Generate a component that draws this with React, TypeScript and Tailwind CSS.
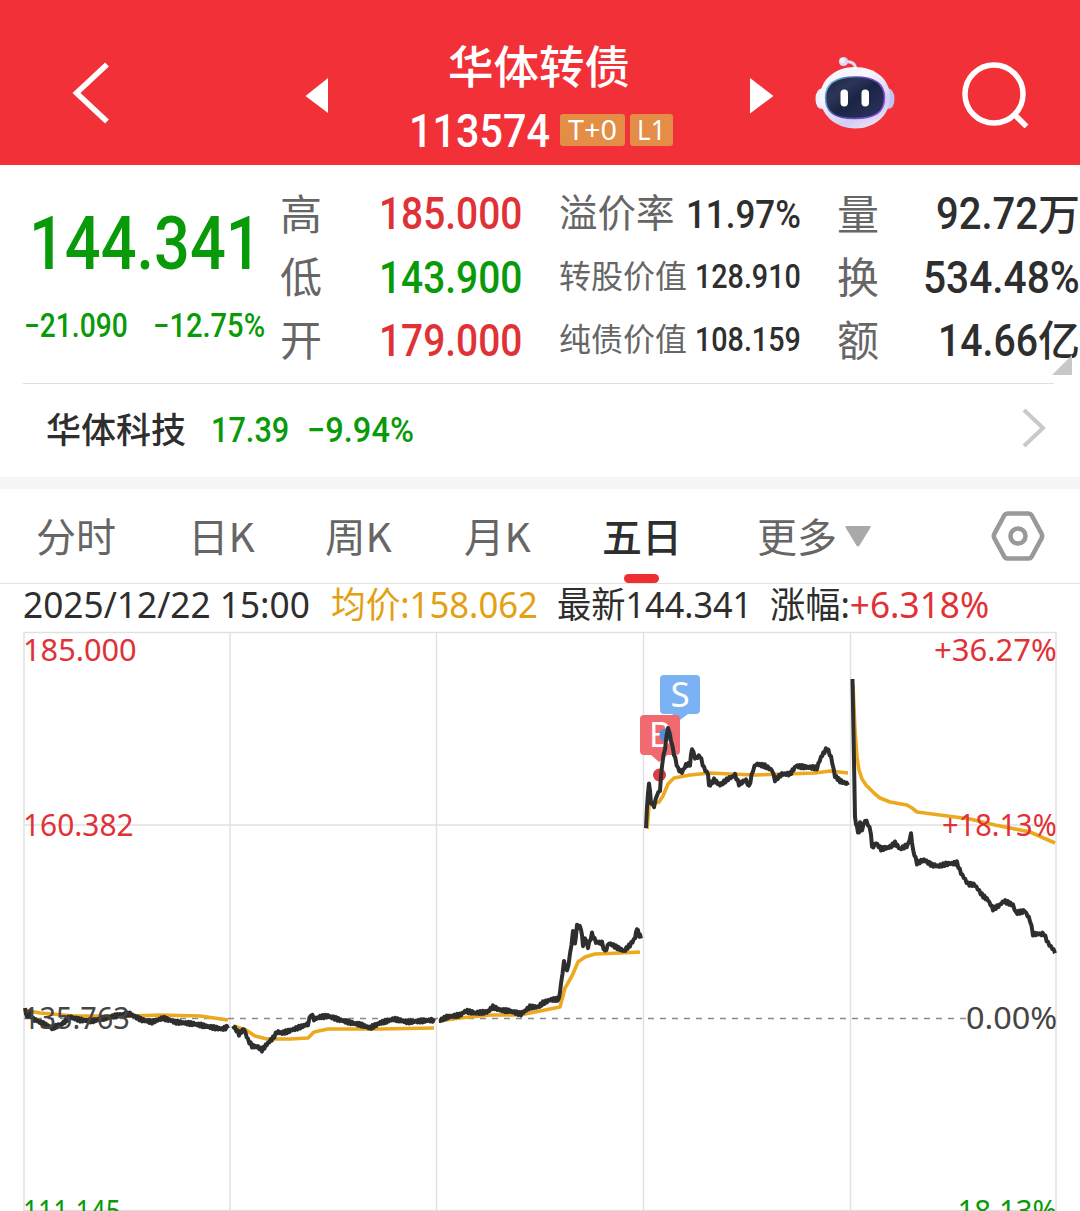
import { useLayoutEffect, useRef, type ReactNode } from 'react'
import clsx from 'clsx'

type Point = [number, number]

const DIN = "font-['Roboto','Noto_Sans_CJK_SC',sans-serif] font-medium"
const TEXT = "font-['Noto_Sans','Noto_Sans_CJK_SC',sans-serif]"
const HAN = "font-['Noto_Sans_CJK_SC',sans-serif]"

// stretches or condenses one line of text to the width of its box
function Fit({ className, children }: { className?: string; children: ReactNode }) {
  const box = useRef<HTMLDivElement>(null)
  const inner = useRef<HTMLSpanElement>(null)

  useLayoutEffect(() => {
    if (!box.current || !inner.current) return
    const ratio = box.current.clientWidth / inner.current.offsetWidth
    inner.current.style.transform = `scaleX(${ratio})`
  }, [children])

  return (
    <div ref={box} className={clsx('shrink-0 leading-none whitespace-nowrap', className)}>
      <span ref={inner} className="inline-block origin-left">{children}</span>
    </div>
  )
}

const PRICE: Point[][] = [
  [[25, 1008], [27, 1018], [30, 1013], [33, 1019], [42, 1023], [52, 1028], [62, 1024], [70, 1017], [80, 1020], [92, 1021], [105, 1018], [120, 1015], [130, 1014], [142, 1020], [152, 1022], [163, 1018], [175, 1022], [195, 1024], [210, 1027], [222, 1029], [228, 1027]],
  [[233, 1026], [235, 1028], [239, 1034], [244, 1029], [248, 1040], [252, 1046], [258, 1047], [262, 1050], [268, 1043], [273, 1038], [277, 1032], [282, 1033], [292, 1030], [303, 1026], [308, 1024], [311, 1014], [314, 1019], [320, 1017], [328, 1016], [340, 1020], [352, 1023], [362, 1025], [370, 1028], [380, 1023], [394, 1019], [408, 1022], [420, 1021], [434, 1020]],
  [[439, 1021], [447, 1017], [460, 1015], [466, 1011], [475, 1013], [487, 1012], [493, 1007], [500, 1010], [510, 1011], [521, 1014], [530, 1007], [538, 1007], [543, 1003], [550, 1000], [559, 999], [561, 984], [564, 962], [567, 972], [570, 955], [573, 932], [575, 944], [577, 926], [581, 928], [583, 945], [585, 938], [588, 947], [592, 934], [596, 942], [602, 943], [605, 952], [609, 943], [616, 947], [624, 951], [630, 945], [635, 938], [637, 928], [639, 935], [641, 937]],
  [[646, 828], [647, 806], [649, 782], [651, 802], [654, 806], [657, 795], [660, 790], [662, 765], [665, 748], [668, 727], [671, 740], [674, 754], [678, 769], [682, 772], [686, 765], [690, 764], [692, 748], [695, 758], [700, 756], [704, 768], [708, 774], [709, 786], [714, 780], [720, 785], [728, 779], [735, 775], [739, 784], [746, 780], [749, 787], [753, 770], [756, 764], [765, 766], [772, 770], [775, 780], [782, 774], [790, 774], [796, 766], [805, 767], [817, 768], [821, 757], [827, 748], [831, 757], [835, 776], [840, 781], [848, 784]],
  [[852.5, 679], [854, 760], [855, 818], [857, 828], [859, 834], [860, 821], [862, 830], [865, 820], [868, 824], [871, 833], [872, 848], [876, 843], [881, 849], [890, 847], [895, 843], [900, 849], [908, 845], [911, 834], [913, 850], [917, 863], [924, 860], [932, 865], [939, 866], [946, 864], [957, 863], [961, 873], [968, 884], [975, 885], [982, 895], [988, 900], [993, 909], [1000, 905], [1004, 901], [1013, 905], [1016, 913], [1025, 911], [1030, 920], [1033, 934], [1044, 934], [1048, 943], [1055, 952]],
]

const AVERAGE: Point[][] = [
  [[24, 1010], [40, 1013], [75, 1016], [130, 1016], [160, 1015], [200, 1016], [228, 1020]],
  [[233, 1026], [246, 1030], [255, 1036], [267, 1039], [290, 1039], [308, 1038], [314, 1032], [328, 1029], [380, 1029], [434, 1028]],
  [[439, 1021], [460, 1018], [490, 1015], [520, 1015], [540, 1011], [560, 1007], [565, 988], [572, 976], [578, 962], [585, 957], [595, 954], [620, 953], [640, 952]],
  [[647, 829], [649, 806], [652, 804], [659, 802], [663, 796], [668, 784], [674, 778], [690, 775], [710, 773], [730, 774], [755, 775], [785, 774], [815, 773], [830, 771], [848, 773]],
  [[853, 685], [855, 730], [857, 757], [859, 770], [862, 779], [866, 785], [870, 789], [875, 794], [880, 798], [890, 802], [907, 805], [912, 808], [917, 812], [940, 815], [970, 819], [995, 825], [1030, 832], [1055, 843]],
]

const toLine = (pts: Point[]) => pts.map(p => p.join(',')).join(' ')

// minute ticks between the key prices
function withTicks(pts: Point[]): Point[] {
  const out: Point[] = [pts[0]]
  let n = 0
  for (let i = 1; i < pts.length; i++) {
    const [x0, y0] = pts[i - 1]
    const [x1, y1] = pts[i]
    const steps = Math.max(1, Math.round((x1 - x0) / 1.3))
    for (let s = 1; s <= steps; s++) {
      n++
      const t = s / steps
      const tick = (n % 2 ? 1 : -1) * (0.4 + Math.abs(Math.sin(n * 12.9)) * 1.2)
      out.push([x0 + (x1 - x0) * t, y0 + (y1 - y0) * t + tick])
    }
  }
  return out
}

function Robot() {
  return (
    <svg width="80" height="74" viewBox="0 0 80 74" className="shrink-0">
      <defs>
        <linearGradient id="shell" x1="0.2" y1="0" x2="0.8" y2="1">
          <stop offset="0.3" stopColor="#f8f6fc" />
          <stop offset="0.75" stopColor="#cfcdf4" />
          <stop offset="1" stopColor="#f0e6f4" />
        </linearGradient>
        <linearGradient id="rim" x1="0" y1="0" x2="1" y2="0.4">
          <stop offset="0" stopColor="#6fd0e0" />
          <stop offset="0.5" stopColor="#4a45a8" />
          <stop offset="1" stopColor="#8a4be0" />
        </linearGradient>
        <linearGradient id="face" x1="0" y1="0" x2="1" y2="1">
          <stop offset="0" stopColor="#1c2340" />
          <stop offset="0.3" stopColor="#2c3658" />
          <stop offset="0.5" stopColor="#1c2444" />
          <stop offset="1" stopColor="#2b3560" />
        </linearGradient>
      </defs>
      <path d="M29 6c7-1 11.500 1 11.500 7" fill="none" stroke="#e4dcf2" strokeWidth="3" />
      <circle cx="28.5" cy="5.500" r="4.6" fill="#dcd6f2" />
      <circle cx="27.5" cy="4.500" r="2.5" fill="#f3f0fb" />
      <path d="M8 32Q.5 33 .5 43T8 53z" fill="#efeefa" />
      <path d="M72 32q7.500 1 7.500 11T72 53z" fill="#c3c1f0" />
      <path d="M40 11C60 11 75 23 75 41S60 72.500 40 72.500 5 58 5 41 20 11 40 11Z" fill="url(#shell)" />
      <path d="M40 21C59 21 69.500 27 69.500 41.500S61 62.500 40 62.500 10.500 56 10.500 41.500 21 21 40 21Z" fill="url(#face)" stroke="url(#rim)" strokeWidth="1.500" />
      <rect x="25.500" y="33.500" width="7.500" height="17" rx="3.700" fill="#fff" />
      <rect x="46.500" y="33.500" width="7.500" height="17" rx="3.700" fill="#fff" />
    </svg>
  )
}

function Header() {
  return (
    <header className="flex h-[165px] shrink-0 items-start bg-[#f23038] text-white">
      <svg width="40" height="66" viewBox="0 0 40 66" className="mt-[60px] ml-[71px]" fill="none" stroke="#fff" strokeWidth="5.5">
        <path d="M36 4.500 5.500 33 36 61.500" />
      </svg>
      <svg width="24" height="36" viewBox="0 0 24 36" className="mt-[78px] ml-[194px]" fill="#fff">
        <path d="M23 0v35L.5 18z" />
      </svg>
      <div className="ml-[79px] flex w-[270px] flex-col">
        <h1 className={clsx(HAN, 'mt-[39px] ml-[40px] text-[45.5px] leading-[50px] font-medium')}>华体转债</h1>
        <div className="mt-[18px] flex h-[46px] items-center">
          <Fit className={clsx(DIN, 'mt-[2px] ml-px w-[141px] text-[46px]')}>113574</Fit>
          <span className={clsx(TEXT, 'ml-[10px] flex h-8 w-[65px] items-center justify-center rounded-[3px] bg-[#e38d46]')}>
            <Fit className="mb-px w-[49px] text-[27px]">T+0</Fit>
          </span>
          <span className={clsx(TEXT, 'ml-[5px] flex h-8 w-[43px] items-center justify-center rounded-[3px] bg-[#e38d46]')}>
            <Fit className="mb-px w-[29px] text-[27px]">L1</Fit>
          </span>
        </div>
      </div>
      <svg width="24" height="36" viewBox="0 0 24 36" className="mt-[78px] ml-[72px]" fill="#fff">
        <path d="M0 0v35.500L23.500 18z" />
      </svg>
      <div className="mt-[56px] ml-[40.5px]"><Robot /></div>
      <svg width="68" height="68" viewBox="0 0 68 68" className="mt-[60px] ml-[67px]" fill="none" stroke="#fff" strokeWidth="5.5">
        <circle cx="32" cy="34" r="29" />
        <path d="m52.500 54.500 12 12" />
      </svg>
    </header>
  )
}

const OHL = [
  { label: '高', value: '185.000', tone: 'text-[#e03236]' },
  { label: '低', value: '143.900', tone: 'text-[#089a08]' },
  { label: '开', value: '179.000', tone: 'text-[#e03236]' },
]

const VALUES = [
  { label: '溢价率', value: '11.97%', labelCls: 'w-[116px] text-[38.5px]', valueCls: 'mt-[2px] w-[115px] text-[39.5px]' },
  { label: '转股价值', value: '128.910', labelCls: 'w-[128px] text-[32px]', valueCls: 'w-[106px] text-[33px]' },
  { label: '纯债价值', value: '108.159', labelCls: 'w-[128px] text-[32px]', valueCls: '-mt-[2px] w-[106px] text-[33px]' },
]

const VOLUMES = [
  { label: '量', value: '92.72', unit: '万', width: 'w-[102px]' },
  { label: '换', value: '534.48%', unit: '', width: 'w-[157px]' },
  { label: '额', value: '14.66', unit: '亿', width: 'w-[100px]' },
]

function Quote() {
  return (
    <section className="relative flex h-[218px] shrink-0">
      <div className={clsx(DIN, 'w-[280px] shrink-0 text-[#089a08]')}>
        <Fit className="mt-[41px] ml-[29px] w-[233px] text-[75px]">144.341</Fit>
        <div className="mt-[29px] ml-[24px] flex">
          <Fit className="w-[104px] text-[32.5px]">−21.090</Fit>
          <Fit className="ml-[25px] w-[112px] text-[32.5px]">−12.75%</Fit>
        </div>
      </div>

      <div className="mt-[17px] w-[242px] shrink-0">
        {OHL.map(row => (
          <div key={row.label} className="flex h-[63.3px] items-center justify-between">
            <span className={clsx(TEXT, 'text-[42px] leading-none text-[#666]')}>{row.label}</span>
            <Fit className={clsx(DIN, row.tone, 'mt-[3px] w-[143px] text-[43.5px]')}>{row.value}</Fit>
          </div>
        ))}
      </div>

      <div className="mt-[17px] ml-[37px] w-[242px] shrink-0">
        {VALUES.map(row => (
          <div key={row.label} className="flex h-[63.3px] items-center justify-between">
            <Fit className={clsx(TEXT, row.labelCls, '-mt-[2px] text-[#666]')}>{row.label}</Fit>
            <Fit className={clsx(DIN, row.valueCls, 'text-[#2e2e2e]')}>{row.value}</Fit>
          </div>
        ))}
      </div>

      <div className="mt-[17px] ml-[36px] w-[243px] shrink-0">
        {VOLUMES.map(row => (
          <div key={row.label} className="flex h-[63.3px] items-center">
            <span className={clsx(TEXT, 'mr-auto text-[42px] leading-none text-[#666]')}>{row.label}</span>
            <Fit className={clsx(DIN, row.width, 'mt-[3px] text-[43.5px] text-[#2e2e2e]')}>{row.value}</Fit>
            {row.unit && <span className={clsx(HAN, 'mb-[4px] w-[42px] text-[42px] leading-none font-medium text-[#2e2e2e]')}>{row.unit}</span>}
          </div>
        ))}
      </div>

      {/* expand corner */}
      <svg width="20" height="20" viewBox="0 0 20 20" className="absolute right-2 bottom-2" fill="#c8c8c8">
        <path d="M20 0v20H0z" />
      </svg>
    </section>
  )
}

function Underlying() {
  return (
    <section className="mr-[26px] ml-[23px] flex h-[94px] shrink-0 items-center border-t border-[#e0e0e0]">
      <span className={clsx(HAN, 'mb-[6px] ml-[23px] text-[35px] leading-none font-medium text-[#2e2e2e]')}>华体科技</span>
      <Fit className={clsx(DIN, 'mb-px ml-[25px] w-[78px] text-[35px] text-[#089a08]')}>17.39</Fit>
      <Fit className={clsx(DIN, 'mb-px ml-[18px] w-[107px] text-[35px] text-[#089a08]')}>−9.94%</Fit>
      <svg width="24" height="40" viewBox="0 0 24 40" className="mr-[8px] mb-[5px] ml-auto" fill="none" stroke="#c9c9c9" strokeWidth="4">
        <path d="m2 2 19 18L2 38" />
      </svg>
    </section>
  )
}

const TABS = [
  { label: '分时', cls: 'ml-[36px] w-[80px]' },
  { label: '日K', cls: 'ml-[72px] w-[67px]' },
  { label: '周K', cls: 'ml-[70px] w-[67px]' },
  { label: '月K', cls: 'ml-[72px] w-[67px]' },
  { label: '五日', cls: 'ml-[71px] w-[80px]', active: true },
  { label: '更多', cls: 'ml-[75px] w-[80px]' },
]

function Tabs() {
  return (
    <nav className="flex h-[107px] shrink-0 items-stretch border-t-[12px] border-b border-t-[#f5f5f5] border-b-[#e4e4e4]">
      {TABS.map(tab => (
        <button key={tab.label} className={clsx('relative flex items-center', tab.cls, tab.active ? 'text-[#2e2e2e]' : 'text-[#666]')}>
          <Fit className={clsx(HAN, 'mb-[3px] w-full text-left text-[40px]', tab.active && 'font-medium')}>{tab.label}</Fit>
          {tab.active && <span className="absolute bottom-0 left-[22px] h-[9px] w-[35px] rounded-full bg-[#ee2f32]" />}
        </button>
      ))}
      <svg width="26" height="21" viewBox="0 0 26 21" className="mt-[37px] ml-[8px]" fill="#a9a9a9">
        <path d="M.5 1.500Q0 0 1.500 0h23q1.500 0 1 1.500L14.500 19.500q-1.500 2-3 0z" />
      </svg>
      <svg width="54" height="52" viewBox="0 0 54 52" className="mt-[21px] ml-[120px]" fill="none" stroke="#999" strokeWidth="4.600" strokeLinejoin="round">
        <path d="M16.500 3.500h21q2 0 3 1.500l10 18.500q1.300 2.500 0 5L40.500 47q-1 1.500-3 1.500h-21q-2 0-3-1.500L3.500 28.500q-1.300-2.500 0-5L13.500 5q1-1.500 3-1.500Z" />
        <circle cx="27" cy="26" r="7.500" />
      </svg>
    </nav>
  )
}

function Summary() {
  return (
    <div className={clsx(TEXT, 'flex h-[41px] shrink-0 items-center text-[36px] text-[#2e2e2e]')}>
      <Fit className="ml-[23px] w-[287px]">2025/12/22 15:00</Fit>
      <Fit className="ml-[21px] w-[207px] text-[#e3a011]">均价:158.062</Fit>
      <Fit className="ml-[19px] w-[195px]">最新144.341</Fit>
      <Fit className="ml-[18px] w-[219px]">涨幅:<span className="text-[#e03236]">+6.318%</span></Fit>
    </div>
  )
}

const AXIS = [
  { price: '185.000', rate: '+36.27%', top: 'top-[9px]', tone: 'text-[#e03236]', lw: 'w-[114px]', rw: 'w-[123px]' },
  { price: '160.382', rate: '+18.13%', top: 'top-[184px]', tone: 'text-[#e03236]', lw: 'w-[111px]', rw: 'w-[115px]' },
  { price: '135.763', rate: '0.00%', top: 'top-[377px]', tone: 'text-[#454545]', lw: 'w-[107px]', rw: 'w-[91px]' },
  { price: '111.145', rate: '-18.13%', top: 'top-[570px]', tone: 'text-[#089a08]', lw: 'w-[98px]', rw: 'w-[109px]' },
]

function Chart() {
  return (
    <div className="relative flex-1 overflow-hidden">
      <svg width="1080" height="586" viewBox="0 625 1080 586" fill="none">
        <g stroke="#e1e1e1" strokeWidth="1.500">
          <path d="M24 632.500H1056M24 825H1056M24 1210.500H1056" />
          <path d="M24 632V1211M230 632V1211M436.500 632V1211M643.500 632V1211M850.500 632V1211M1056 632V1211" />
        </g>
        <path d="M24 1018.500H966" stroke="#8a8a8a" strokeWidth="1.600" strokeDasharray="6 6" />
        <g stroke="#eca91f" strokeWidth="3.600" strokeLinejoin="round">
          {AVERAGE.map((pts, i) => <polyline key={i} points={toLine(pts)} />)}
        </g>

        {/* sell / buy markers */}
        <path d="M664 675h32q4 0 4 4v31q0 4-4 4h-8l-8 6-8-6h-8q-4 0-4-4v-31q0-4 4-4Z" fill="#7ab2f3" />
        <text x="680" y="707" textAnchor="middle" fill="#fff" fontSize="35" className="font-['Noto_Sans',sans-serif]">S</text>
        <path d="M644 715h32q4 0 4 4v32q0 4-4 4h-8.500l-8.500 7-8-7h-7q-4 0-4-4v-32q0-4 4-4Z" fill="#f16a70" />
        <text x="660" y="747" textAnchor="middle" fill="#fff" fontSize="34" className="font-['Noto_Sans',sans-serif]">B</text>
        <circle cx="666" cy="735" r="6.500" fill="#4d8fd8" />
        <circle cx="659.500" cy="775" r="6.500" fill="#e03a42" />

        <g stroke="#2e2e2e" strokeWidth="4" strokeLinejoin="round">
          {PRICE.map((pts, i) => <polyline key={i} points={toLine(withTicks(pts))} />)}
        </g>
      </svg>

      {AXIS.map(row => (
        <div key={row.price} className={clsx(TEXT, row.top, row.tone, 'absolute inset-x-0 flex justify-between pr-[23px] pl-[23px] text-[31px]')}>
          <Fit className={row.lw}>{row.price}</Fit>
          <Fit className={row.rw}>{row.rate}</Fit>
        </div>
      ))}
    </div>
  )
}

export default function App() {
  return (
    <main className="flex h-[1211px] w-[1080px] flex-col overflow-hidden bg-white">
      <Header />
      <Quote />
      <Underlying />
      <Tabs />
      <Summary />
      <Chart />
    </main>
  )
}
